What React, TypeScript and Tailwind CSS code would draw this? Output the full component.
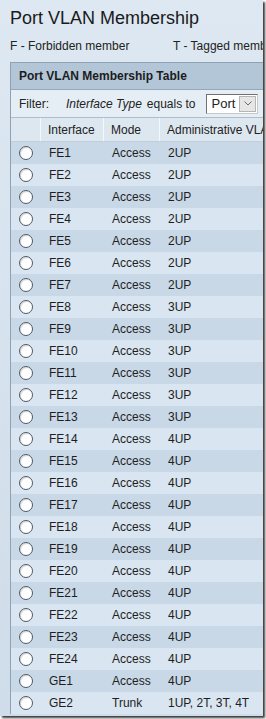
import React from "react";

const rows: [string, string, string][] = [
  ["FE1", "Access", "2UP"],
  ["FE2", "Access", "2UP"],
  ["FE3", "Access", "2UP"],
  ["FE4", "Access", "2UP"],
  ["FE5", "Access", "2UP"],
  ["FE6", "Access", "2UP"],
  ["FE7", "Access", "2UP"],
  ["FE8", "Access", "3UP"],
  ["FE9", "Access", "3UP"],
  ["FE10", "Access", "3UP"],
  ["FE11", "Access", "3UP"],
  ["FE12", "Access", "3UP"],
  ["FE13", "Access", "3UP"],
  ["FE14", "Access", "4UP"],
  ["FE15", "Access", "4UP"],
  ["FE16", "Access", "4UP"],
  ["FE17", "Access", "4UP"],
  ["FE18", "Access", "4UP"],
  ["FE19", "Access", "4UP"],
  ["FE20", "Access", "4UP"],
  ["FE21", "Access", "4UP"],
  ["FE22", "Access", "4UP"],
  ["FE23", "Access", "4UP"],
  ["FE24", "Access", "4UP"],
  ["GE1", "Access", "4UP"],
  ["GE2", "Trunk", "1UP, 2T, 3T, 4T"],
];

function Radio() {
  return (
    <div className="w-[14px] h-[14px] rounded-full border border-[#4f5a66] bg-white shadow-[inset_1px_1px_1px_rgba(0,0,0,0.15)]" />
  );
}

export default function App() {
  return (
    <div className="w-[266px] h-[719px] bg-white overflow-hidden" style={{ fontFamily: '"Liberation Sans", Arial, sans-serif' }}>
      <div className="w-[263px] h-[716px] overflow-hidden bg-gradient-to-b from-[#dde8f2] to-[#cfdce9] shadow-[2px_2px_2px_#3a3a3a]">
        <div className="w-[400px]">
          <h1 className="pl-[10px] pt-[7px] text-[18px] leading-[22px] text-[#1a1a1a]">Port VLAN Membership</h1>
          <div className="flex pl-[10px] mt-[10px] text-[12px] leading-[14px] text-[#222]">
            <span className="w-[163px]">F - Forbidden member</span>
            <span>T - Tagged member</span>
          </div>

          <div className="ml-[10px] mt-[9px] border-l border-t border-[#8fa2b4] w-[380px]">
            <div className="h-[27px] bg-[#b3c6d7] border-b border-[#94a8ba] flex items-center pl-[8px] text-[12px] font-bold text-[#1c1c1c]">
              Port VLAN Membership Table
            </div>
            <div className="h-[28px] bg-[#e6eef5] border-b border-[#aebdcb] flex items-center pl-[8px] text-[12px] text-[#222]">
              <span className="w-[47px]">Filter:</span>
              <span className="italic">Interface Type</span>
              <span className="ml-[5px]">equals to</span>
              <div className="ml-[10px] h-[20px] flex items-center bg-white border border-[#707070] border-r-[#c8c8c8] border-b-[#c8c8c8]">
                <span className="pl-[5px] pr-[4px] text-[13px]">Port</span>
                <div className="w-[17px] h-[16px] mr-[1px] bg-[#e6e6e6] border border-[#b5b5b5] flex items-center justify-center">
                  <svg width="8" height="5" viewBox="0 0 8 5">
                    <path d="M0.5 0.5 L4 4 L7.5 0.5" stroke="#6a6a6a" fill="none" strokeWidth="1" />
                  </svg>
                </div>
              </div>
            </div>
            <div className="h-[24px] bg-[#dde7f0] flex text-[12px] text-[#222] border-b border-[#c1cfdc]">
              <div className="w-[30px] border-r border-[#f4f8fb]" />
              <div className="w-[63px] pl-[7px] flex items-center border-r border-[#f4f8fb]">Interface</div>
              <div className="w-[56px] pl-[7px] flex items-center border-r border-[#f4f8fb]">Mode</div>
              <div className="pl-[7px] flex items-center">Administrative VLANs</div>
            </div>
            {rows.map(([name, mode, vlans], i) => (
              <div
                key={name}
                className={
                  "h-[22px] flex items-center text-[12px] text-[#1e1e1e] " +
                  (i % 2 === 0 ? "bg-[#c8d8e7]" : "bg-[#d9e5f0]")
                }
              >
                <div className="w-[30px] flex justify-center">
                  <Radio />
                </div>
                <div className="w-[63px] pl-[8px]">{name}</div>
                <div className="w-[56px] pl-[8px]">{mode}</div>
                <div className="pl-[8px]">{vlans}</div>
              </div>
            ))}
          </div>
        </div>
      </div>
    </div>
  );
}
